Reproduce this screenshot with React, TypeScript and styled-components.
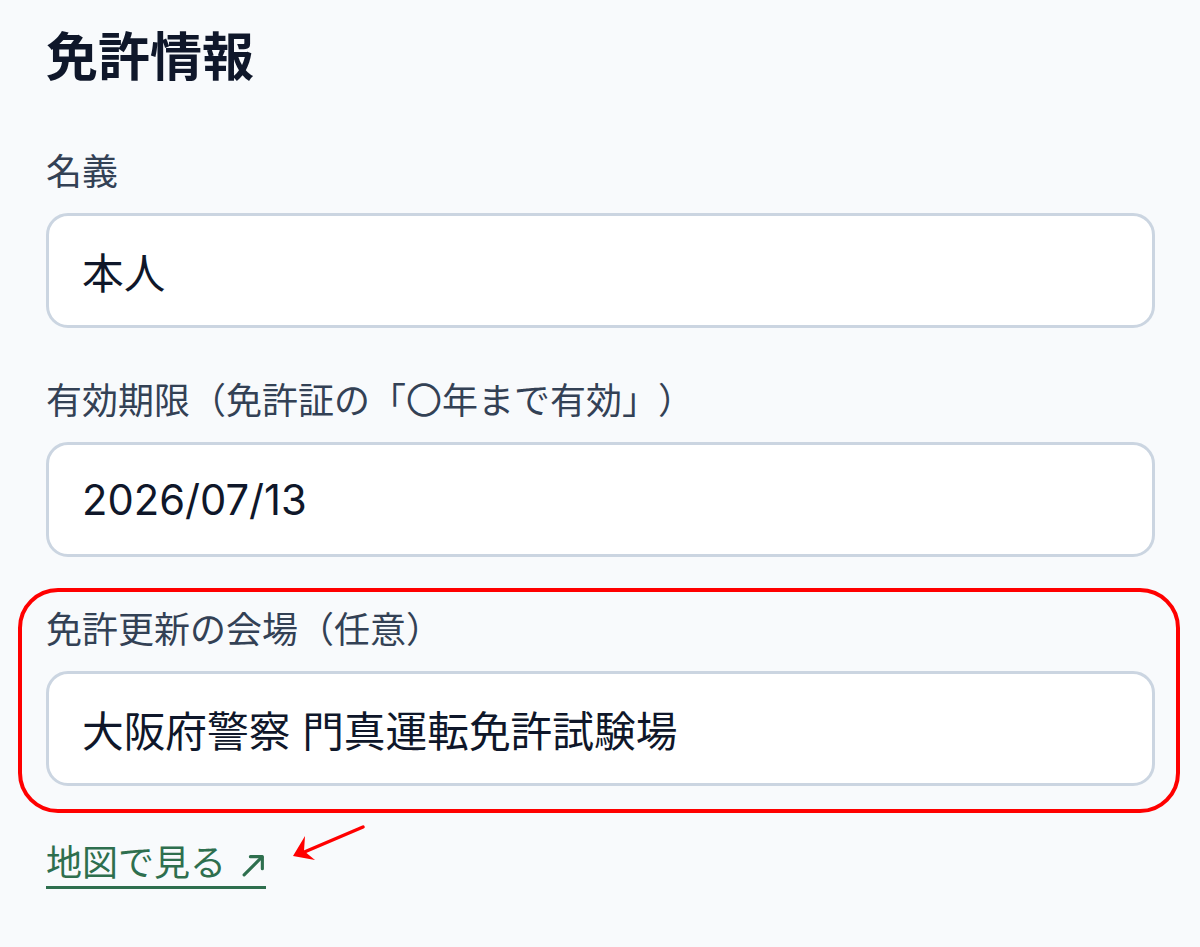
import React from "react";
import styled, { createGlobalStyle } from "styled-components";

const GlobalStyle = createGlobalStyle`
  html, body {
    margin: 0;
    padding: 0;
    background: #f8fafc;
  }
  body {
    font-family: Inter, "Noto Sans CJK JP", sans-serif;
    color: #0f172a;
    text-spacing-trim: space-all;
  }
`;

const Page = styled.div`
  position: relative;
  min-height: 947px;
  padding: 24px 45px 40px 46px;
  box-sizing: border-box;
  background: #f8fafc;
`;

const Title = styled.h2`
  margin: 0 0 56px;
  font-size: 52px;
  line-height: 68px;
  font-weight: 700;
  color: #0f172a;
`;

const Fields = styled.div`
  display: flex;
  flex-direction: column;
  gap: 49px;
`;

const Field = styled.div<{ $highlight?: boolean }>`
  display: flex;
  flex-direction: column;
  gap: 17px;
  ${({ $highlight }) =>
    $highlight &&
    `
    margin: -18px -25px -27px -28px;
    padding: 14px 21px 23px 24px;
    border: 4px solid #ff0000;
    border-radius: 40px;
  `}
`;

const Label = styled.label`
  font-size: 36px;
  line-height: 48px;
  color: #334155;
  text-spacing-trim: space-all;
`;

const Input = styled.input`
  box-sizing: border-box;
  width: 100%;
  height: 115px;
  padding: 0 33px;
  border: 3px solid #cbd5e1;
  border-radius: 22px;
  background: #ffffff;
  font-family: Inter, "Noto Sans CJK JP", sans-serif;
  font-size: 41.7px;
  color: #0f172a;
  outline: none;
`;

const LinkRow = styled.div`
  margin-top: 55px;
`;

const MapLink = styled.a`
  display: inline-flex;
  align-items: center;
  gap: 15px;
  font-size: 36px;
  line-height: 45px;
  color: #2e6f4e;
  text-decoration: none;
  border-bottom: 3px solid #2e6f4e;
`;

const ExternalIcon = styled.svg`
  width: 25px;
  height: 25px;
  margin-top: 4px;
`;

const Pointer = styled.svg`
  position: absolute;
  left: 290px;
  top: 820px;
`;

const fields = [
  { label: "名義", value: "本人" },
  { label: "有効期限（免許証の「〇年まで有効」）", value: "2026/07/13" },
  { label: "免許更新の会場（任意）", value: "大阪府警察 門真運転免許試験場", highlight: true },
];

const App = () => {
  return (
    <Page>
      <GlobalStyle />
      <Title>免許情報</Title>
      <Fields>
        {fields.map((f) => (
          <Field key={f.label} $highlight={f.highlight}>
            <Label>{f.label}</Label>
            <Input defaultValue={f.value} readOnly />
          </Field>
        ))}
      </Fields>
      <LinkRow>
        <MapLink href="#">
          地図で見る
          <ExternalIcon viewBox="0 0 24 24" fill="none" stroke="currentColor" strokeWidth="3" strokeLinecap="round" strokeLinejoin="round">
            <path d="M3 21 L20 4" />
            <path d="M9 3.5 H20.5 V15" />
          </ExternalIcon>
        </MapLink>
      </LinkRow>
      <Pointer width="80" height="45" viewBox="0 0 80 45">
        <line x1="73" y1="7" x2="12" y2="33" stroke="#ff0000" strokeWidth="3.5" strokeLinecap="round" />
        <path d="M3 36 L15 16 L14 31 L25 40 Z" fill="#ff0000" />
      </Pointer>
    </Page>
  );
};

export default App;
